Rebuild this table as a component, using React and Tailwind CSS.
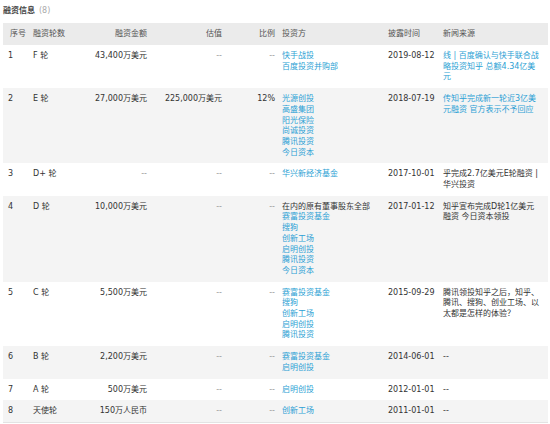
import React from "react";

const rows = [
  {
    no: "1", round: "F 轮", amount: "43,400万美元", value: "--", ratio: "--",
    investors: [["快手战投", true], ["百度投资并购部", true]],
    date: "2019-08-12",
    news: ["线 | 百度确认与快手联合战", "略投资知乎 总额4.34亿美", "元"], newsLink: true,
  },
  {
    no: "2", round: "E 轮", amount: "27,000万美元", value: "225,000万美元", ratio: "12%",
    investors: [["光源创投", true], ["高盛集团", true], ["阳光保险", true], ["尚诚投资", true], ["腾讯投资", true], ["今日资本", true]],
    date: "2018-07-19",
    news: ["传知乎完成新一轮近3亿美", "元融资 官方表示不予回应"], newsLink: true,
  },
  {
    no: "3", round: "D+ 轮", amount: "--", value: "--", ratio: "--",
    investors: [["华兴新经济基金", true]],
    date: "2017-10-01",
    news: ["乎完成2.7亿美元E轮融资 |", "华兴投资"], newsLink: false,
  },
  {
    no: "4", round: "D 轮", amount: "10,000万美元", value: "--", ratio: "--",
    investors: [["在内的原有董事股东全部", false], ["赛富投资基金", true], ["搜狗", true], ["创新工场", true], ["启明创投", true], ["腾讯投资", true], ["今日资本", true]],
    date: "2017-01-12",
    news: ["知乎宣布完成D轮1亿美元", "融资 今日资本领投"], newsLink: false,
  },
  {
    no: "5", round: "C 轮", amount: "5,500万美元", value: "--", ratio: "--",
    investors: [["赛富投资基金", true], ["搜狗", true], ["创新工场", true], ["启明创投", true], ["腾讯投资", true]],
    date: "2015-09-29",
    news: ["腾讯领投知乎之后，知乎、", "腾讯、搜狗、创业工场、以", "太都是怎样的体验？"], newsLink: false,
  },
  {
    no: "6", round: "B 轮", amount: "2,200万美元", value: "--", ratio: "--",
    investors: [["赛富投资基金", true], ["启明创投", true]],
    date: "2014-06-01", news: ["--"], newsLink: false,
  },
  {
    no: "7", round: "A 轮", amount: "500万美元", value: "--", ratio: "--",
    investors: [["启明创投", true]],
    date: "2012-01-01", news: ["--"], newsLink: false,
  },
  {
    no: "8", round: "天使轮", amount: "150万人民币", value: "--", ratio: "--",
    investors: [["创新工场", true]],
    date: "2011-01-01", news: ["--"], newsLink: false,
  },
];

const font = { fontFamily: '"DejaVu Sans", "Noto Sans CJK SC", sans-serif' };

// "--" placeholders are drawn lighter than real values
const tone = (v) => (v === "--" ? "text-[#999]" : "text-[#333]");

export default function App() {
  return (
    <div className="w-[550px] h-[424px] bg-white pl-[3px] pt-[6px] text-[8px] leading-[10.7px] text-[#333]" style={font}>
      <div className="flex items-center gap-[4px] h-[11px] mb-[6px]">
        <span className="font-bold text-[#444]">融资信息</span>
        <span className="text-[#aaa]">(8)</span>
      </div>
      <table className="table-fixed w-[545px] border-collapse border-b border-[#e3e3e3]">
        <colgroup>
          <col className="w-[27px]" />
          <col className="w-[60px]" />
          <col className="w-[60px]" />
          <col className="w-[75px]" />
          <col className="w-[53px]" />
          <col className="w-[107px]" />
          <col className="w-[54px]" />
          <col className="w-[109px]" />
        </colgroup>
        <thead>
          <tr className="bg-[#ebebeb] text-[#555] h-[22px]">
            <th className="font-normal text-left pl-[7px]">序号</th>
            <th className="font-normal text-left pl-[3px]">融资轮数</th>
            <th className="font-normal text-right pr-[3px]">融资金额</th>
            <th className="font-normal text-right pr-[3px]">估值</th>
            <th className="font-normal text-right pr-[3px]">比例</th>
            <th className="font-normal text-left pl-[4px]">投资方</th>
            <th className="font-normal text-left pl-[3px]">披露时间</th>
            <th className="font-normal text-left pl-[4px]">新闻来源</th>
          </tr>
        </thead>
        <tbody>
          {rows.map((r, i) => (
            <tr key={r.no} className={i % 2 === 1 ? "bg-[#f4f4f4] align-top" : "bg-white align-top"}>
              <td className="pl-[5px] pt-[6px] pb-[5px]">{r.no}</td>
              <td className="pl-[3px] pt-[6px]">{r.round}</td>
              <td className={`text-right pr-[3px] pt-[6px] ${tone(r.amount)}`}>{r.amount}</td>
              <td className={`text-right pr-[3px] pt-[6px] ${tone(r.value)}`}>{r.value}</td>
              <td className={`text-right pr-[3px] pt-[6px] ${tone(r.ratio)}`}>{r.ratio}</td>
              <td className="pl-[4px] pt-[6px] pb-[5px]">
                {r.investors.map(([name, link]) => (
                  <div key={name} className={link ? "text-[#2c9fd4]" : "text-[#333]"}>{name}</div>
                ))}
              </td>
              <td className="pl-[3px] pt-[6px]">{r.date}</td>
              <td className={`pl-[4px] pt-[6px] pb-[5px] ${r.newsLink ? "text-[#2c9fd4]" : "text-[#333]"}`}>
                {r.news.map((line) => (
                  <div key={line} className="whitespace-nowrap">{line}</div>
                ))}
              </td>
            </tr>
          ))}
        </tbody>
      </table>
    </div>
  );
}
